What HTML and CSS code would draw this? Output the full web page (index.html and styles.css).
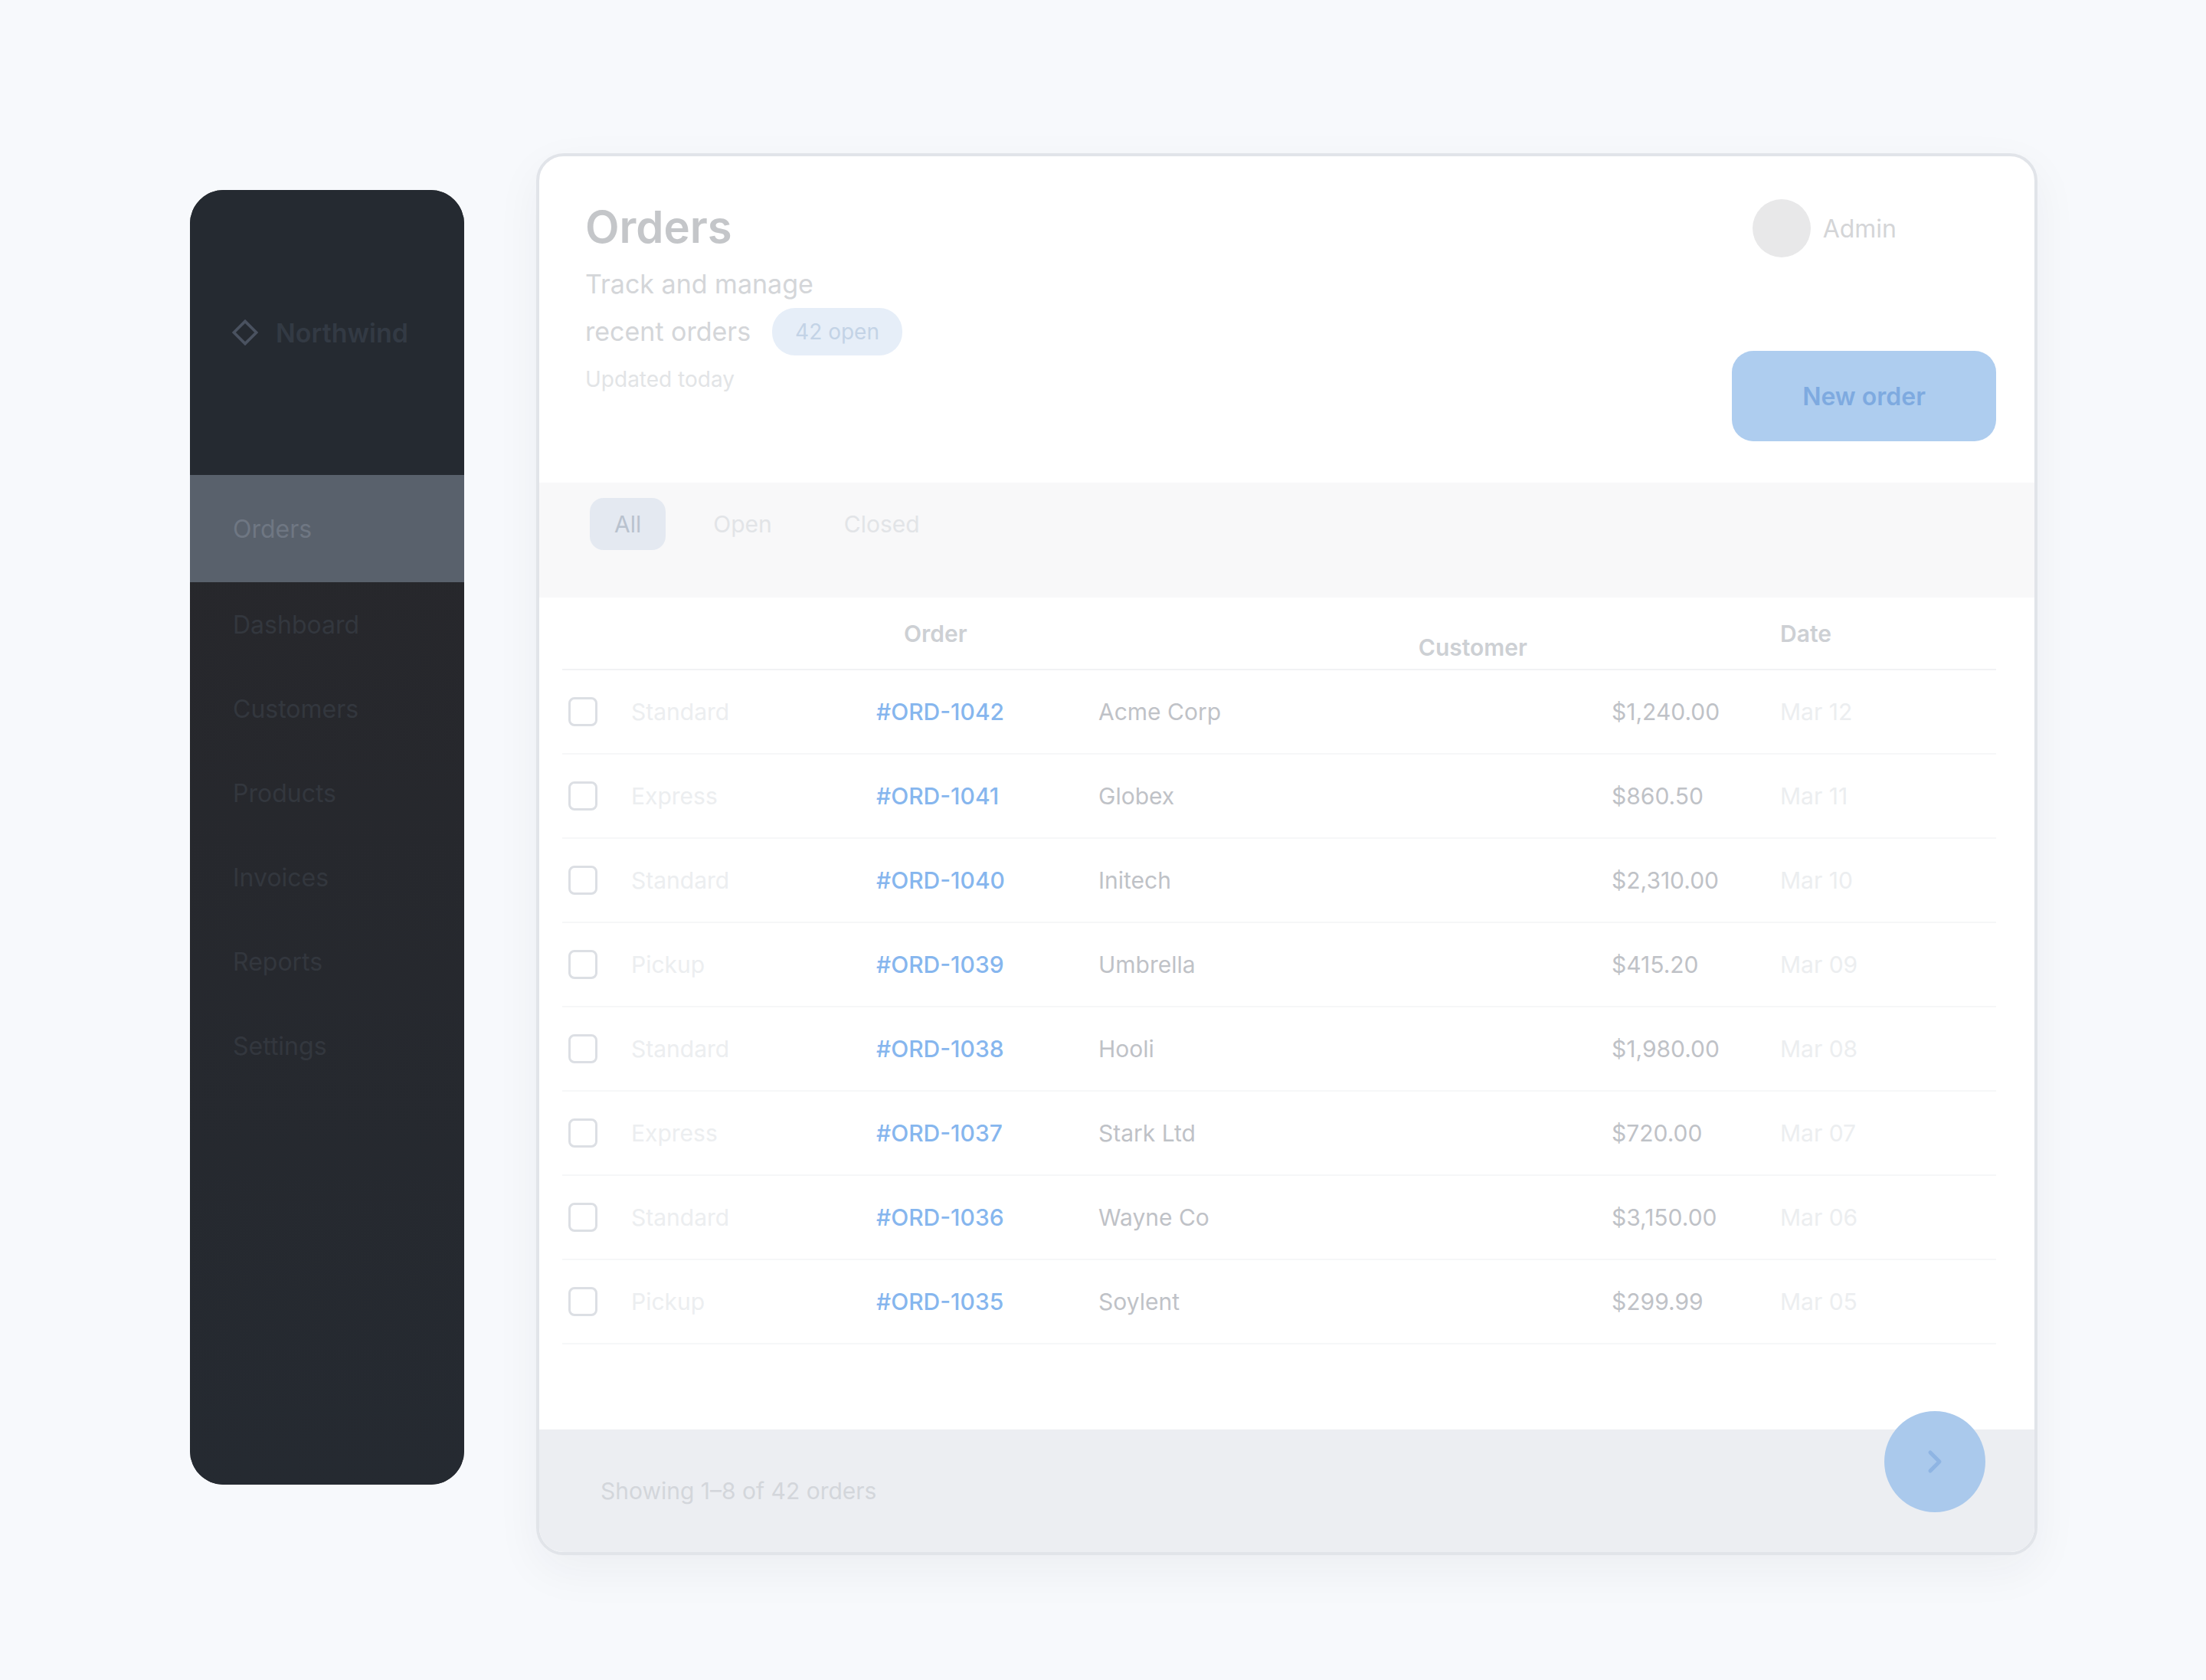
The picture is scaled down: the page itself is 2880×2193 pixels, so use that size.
FILE: index.html
```html
<!DOCTYPE html>
<html lang="en">
<head>
<meta charset="utf-8">
<title>Orders</title>
<link rel="stylesheet" href="styles.css">
</head>
<body>
<div class="app">
  <aside class="sidebar">
    <div class="brand">
      <div class="logo"><svg viewBox="0 0 24 24" width="44" height="44"><path d="M4 12l8-8 8 8-8 8z" fill="none" stroke="#4a5260" stroke-width="2"/></svg></div>
      <span class="brand-name">Northwind</span>
    </div>
    <nav class="nav">
      <a class="nav-item active">Orders</a>
      <a class="nav-item">Dashboard</a>
      <a class="nav-item">Customers</a>
      <a class="nav-item">Products</a>
      <a class="nav-item">Invoices</a>
      <a class="nav-item">Reports</a>
      <a class="nav-item">Settings</a>
    </nav>
  </aside>

  <main class="main">
    <header class="header">
      <div class="title-block">
        <h1 class="title">Orders</h1>
        <p class="subtitle">Track and manage</p>
        <div class="sub-row">
          <p class="subtitle">recent orders</p>
          <span class="count">42 open</span>
        </div>
        <p class="subtitle small">Updated today</p>
      </div>
      <div class="actions">
        <div class="user"><span class="avatar"></span><span class="user-name">Admin</span></div>
        <button class="btn-primary">New order</button>
      </div>
    </header>

    <div class="tabs">
      <span class="tab active">All</span>
      <span class="tab">Open</span>
      <span class="tab">Closed</span>
    </div>

    <div class="table">
      <div class="row head">
        <span class="cell"></span>
        <span class="cell"></span>
        <span class="cell hcell shift">Order</span>
        <span class="cell hcell right">Customer</span>
        <span class="cell"></span>
        <span class="cell hcell">Date</span>
      </div>
      <div class="row"><span class="cell"><i class="check"></i></span><span class="cell faint">Standard</span><span class="cell link">#ORD-1042</span><span class="cell muted">Acme Corp</span><span class="cell muted">$1,240.00</span><span class="cell faint">Mar 12</span></div>
      <div class="row"><span class="cell"><i class="check"></i></span><span class="cell faint">Express</span><span class="cell link">#ORD-1041</span><span class="cell muted">Globex</span><span class="cell muted">$860.50</span><span class="cell faint">Mar 11</span></div>
      <div class="row"><span class="cell"><i class="check"></i></span><span class="cell faint">Standard</span><span class="cell link">#ORD-1040</span><span class="cell muted">Initech</span><span class="cell muted">$2,310.00</span><span class="cell faint">Mar 10</span></div>
      <div class="row"><span class="cell"><i class="check"></i></span><span class="cell faint">Pickup</span><span class="cell link">#ORD-1039</span><span class="cell muted">Umbrella</span><span class="cell muted">$415.20</span><span class="cell faint">Mar 09</span></div>
      <div class="row"><span class="cell"><i class="check"></i></span><span class="cell faint">Standard</span><span class="cell link">#ORD-1038</span><span class="cell muted">Hooli</span><span class="cell muted">$1,980.00</span><span class="cell faint">Mar 08</span></div>
      <div class="row"><span class="cell"><i class="check"></i></span><span class="cell faint">Express</span><span class="cell link">#ORD-1037</span><span class="cell muted">Stark Ltd</span><span class="cell muted">$720.00</span><span class="cell faint">Mar 07</span></div>
      <div class="row"><span class="cell"><i class="check"></i></span><span class="cell faint">Standard</span><span class="cell link">#ORD-1036</span><span class="cell muted">Wayne Co</span><span class="cell muted">$3,150.00</span><span class="cell faint">Mar 06</span></div>
      <div class="row"><span class="cell"><i class="check"></i></span><span class="cell faint">Pickup</span><span class="cell link">#ORD-1035</span><span class="cell muted">Soylent</span><span class="cell muted">$299.99</span><span class="cell faint">Mar 05</span></div>
    </div>

    <footer class="footer">
      <span class="footer-text">Showing 1–8 of 42 orders</span>
    </footer>

    <button class="fab" aria-label="Next">
      <svg viewBox="0 0 24 24" width="48" height="48"><path d="M9 6l6 6-6 6" fill="none" stroke="#8fb5e3" stroke-width="2.5" stroke-linecap="round" stroke-linejoin="round"/></svg>
    </button>
  </main>
</div>
</body>
</html>
```

FILE: styles.css
```css
* { box-sizing: border-box; }

body {
  margin: 0;
  background: #f7f9fc;
  font-family: Inter, "Liberation Sans", sans-serif;
}

.app {
  display: flex;
  align-items: flex-start;
  gap: 94px;
  padding: 200px 0 0 248px;
  width: 2880px;
  height: 2193px;
}

/* Sidebar */
.sidebar {
  width: 358px;
  height: 1690px;
  margin-top: 48px;
  border-radius: 44px;
  overflow: hidden;
  background: #24262b;
  display: flex;
  flex-direction: column;
}

.brand {
  height: 372px;
  background: #252a31;
  display: flex;
  align-items: center;
  gap: 18px;
  padding: 0 50px;
}

.logo { display: flex; }

.brand-name {
  color: #333a44;
  font-size: 34px;
  font-weight: 600;
}

.nav {
  flex: 1;
  display: flex;
  flex-direction: column;
  background: linear-gradient(#27272b, #252a31);
}

.nav-item {
  display: flex;
  align-items: center;
  height: 110px;
  padding: 0 56px;
  color: #33373e;
  font-size: 32px;
}

.nav-item.active {
  height: 140px;
  background: #59616c;
  color: #6f7783;
}

/* Main panel */
.main {
  position: relative;
  width: 1960px;
  height: 1830px;
  background: #ffffff;
  border: 4px solid #e1e4e9;
  border-radius: 36px;
  box-shadow: 0 20px 60px rgba(30, 40, 60, 0.05);
  display: flex;
  flex-direction: column;
  overflow: hidden;
}

.header {
  height: 406px;
  display: flex;
  justify-content: space-between;
  padding: 52px 50px 0 60px;
}

.title-block {
  display: flex;
  flex-direction: column;
  gap: 6px;
}

.title {
  margin: 0 0 4px;
  font-size: 58px;
  line-height: 80px;
  font-weight: 600;
  color: #c4c6c9;
}

.sub-row {
  display: flex;
  align-items: center;
  gap: 28px;
}

.subtitle {
  margin: 0;
  font-size: 34px;
  line-height: 50px;
  color: #d4d6d9;
}

.subtitle.small {
  font-size: 28px;
  color: #e2e4e6;
}

.count {
  padding: 14px 30px;
  border-radius: 30px;
  background: #e6eef8;
  color: #c3d3e6;
  font-size: 28px;
}

.actions {
  display: flex;
  flex-direction: column;
  align-items: flex-end;
  gap: 122px;
}

.user {
  display: flex;
  align-items: center;
  gap: 16px;
  margin-right: 130px;
  padding-top: 4px;
}

.avatar {
  width: 76px;
  height: 76px;
  border-radius: 50%;
  background: #e8e8e9;
}

.user-name {
  color: #d4d5d7;
  font-size: 32px;
}

.btn-primary {
  width: 345px;
  height: 118px;
  border: none;
  border-radius: 28px;
  background: #aecdef;
  color: #7eaae0;
  font-family: inherit;
  font-size: 32px;
  font-weight: 600;
}

/* Tabs */
.tabs {
  margin-top: 20px;
  height: 150px;
  background: #f8f8f9;
  display: flex;
  align-items: flex-start;
  gap: 30px;
  padding: 20px 60px 0 66px;
}

.tab {
  padding: 16px 32px;
  border-radius: 18px;
  font-size: 30px;
  color: #e2e4e7;
}

.tab.active {
  background: #e4e9f1;
  color: #b9c2ce;
}

/* Table */
.table {
  display: flex;
  flex-direction: column;
  padding: 0 50px 0 30px;
}

.row {
  display: grid;
  grid-template-columns: 90px 320px 290px 670px 220px 290px;
  align-items: center;
  height: 110px;
  border-bottom: 2px solid #f6f7f8;
}

.row.head {
  height: 95px;
  border-bottom: 2px solid #f1f2f4;
}

.cell {
  font-size: 30px;
  white-space: nowrap;
}

.hcell {
  color: #cdd0d4;
  font-weight: 600;
}

.hcell.shift { padding-left: 36px; }

.hcell.right {
  text-align: right;
  padding-right: 110px;
  padding-top: 36px;
}

.check {
  display: block;
  width: 38px;
  height: 38px;
  margin-left: 8px;
  border: 3px solid #dcdfe4;
  border-radius: 8px;
}

.faint { color: #eceef0; }

.link {
  color: #86b6ee;
  font-weight: 500;
}

.muted { color: #bfc2c7; }

/* Footer */
.footer {
  margin-top: auto;
  height: 160px;
  background: #eceef2;
  display: flex;
  align-items: center;
  padding: 0 80px;
}

.footer-text {
  color: #d3d6db;
  font-size: 30px;
}

.fab {
  position: absolute;
  left: 1756px;
  top: 1638px;
  width: 132px;
  height: 132px;
  border: none;
  border-radius: 50%;
  background: #aac9ec;
  display: flex;
  align-items: center;
  justify-content: center;
}
```
